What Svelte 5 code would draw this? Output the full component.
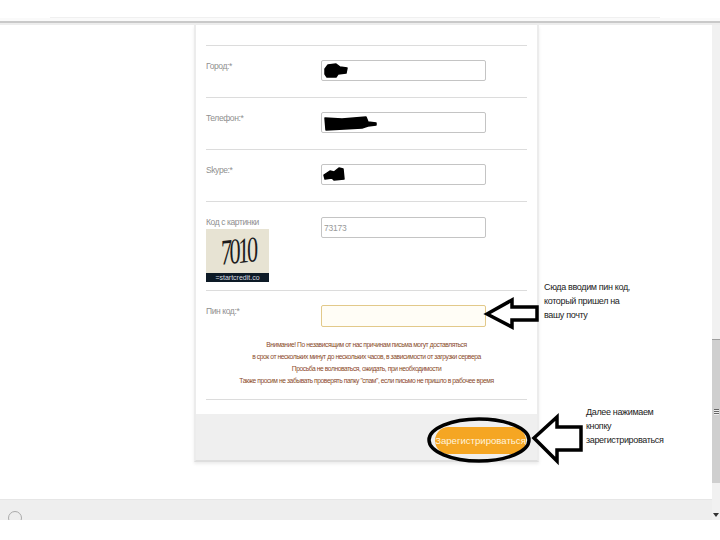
<script>
	const fields = [
		{ label: "Город:*", blot: "M3 7 L6 3 L14 2 L18 5 L25 6 L24 11 L16 12 L14 15 L5 15 L3 12 Z" },
		{ label: "Телефон:*", blot: "M3 4 L20 5 L44 3 L46 8 L54 9 L54 11 L46 12 L40 14 L4 16 Z" },
		{ label: "Skype:*", blot: "M2 9 L8 5 L12 6 L17 2 L21 3 L22 13 L12 14 L10 12 L3 13 Z" }
	];

	const notes = [
		"Внимание! По независящим от нас причинам письма могут доставляться",
		"в срок от нескольких минут до нескольких часов, в зависимости от загрузки сервера",
		"Просьба не волноваться, ожидать, при необходимости",
		"Также просим не забывать проверять папку \"спам\", если письмо не пришло в рабочее время"
	];
</script>

<div class="shot">
	<div class="top"></div>
	<div class="toolbar"></div>
	<div class="middle">
		<div class="left">
			<div class="content">
				<div class="card">
					<div class="form">
						<div class="spacer"></div>
						{#each fields as f}
							<div class="row">
								<span class="label">{f.label}</span>
								<div class="input">
									<svg class="blot" width="60" height="18" viewBox="0 0 60 18"><path d={f.blot} fill="#000" stroke="#000" stroke-width="1.5" stroke-linejoin="round" /></svg>
								</div>
							</div>
						{/each}
						<div class="row captcha-row">
							<div class="captcha-col">
								<span class="label">Код с картинки</span>
								<div class="captcha">
									<div class="captcha-pic"><span>7010</span></div>
									<div class="captcha-foot">=startcredit.co</div>
								</div>
							</div>
							<div class="input"><span class="value">73173</span></div>
						</div>
						<div class="row pin-row">
							<span class="label">Пин код:*</span>
							<div class="input active"></div>
						</div>
						<div class="notes">
							{#each notes as n}
								<p>{n}</p>
							{/each}
						</div>
					</div>
					<div class="actions">
						<button class="submit">Зарегистрироваться</button>
					</div>
				</div>
			</div>
			<div class="bottom"><span class="tray"></span></div>
		</div>
		<div class="scrollbar">
			<div class="thumb"><span class="grip"></span></div>
			<span class="down"></span>
		</div>
	</div>

	<!-- annotations drawn on top of the screenshot -->
	<svg class="marks" width="720" height="540" viewBox="0 0 720 540">
		<g fill="#fff" stroke="#000" stroke-width="3.5">
			<path d="M487 314 L512 300 L512 307 L537 307 L537 320 L512 320 L512 327 Z" />
			<path d="M534 438 L557 417 L557 427 L581 427 L581 450 L557 450 L557 461 Z" />
		</g>
		<ellipse cx="479" cy="440" rx="50" ry="21" fill="none" stroke="#000" stroke-width="3.5" />
	</svg>
	<div class="note note-a">
		<div>Сюда вводим пин код,</div>
		<div>который пришел на</div>
		<div>вашу почту</div>
	</div>
	<div class="note note-b">
		<div>Далее нажимаем</div>
		<div>кнопку</div>
		<div>зарегистрироваться</div>
	</div>
</div>

<style>
	:global(body) {
		margin: 0;
		background: #fff;
	}

	.shot {
		position: relative;
		width: 720px;
		height: 540px;
		overflow: hidden;
		font-family: "Liberation Sans", Arial, sans-serif;
		display: flex;
		flex-direction: column;
	}

	.top {
		height: 18px;
		margin: 0 60px 0 50px;
		border-bottom: 1px solid #f0f0f0;
		box-sizing: border-box;
	}

	.toolbar {
		height: 7px;
		background: linear-gradient(#fafafa 0 3px, #c9c9c9 3px 5px, #ededed 5px);
	}

	.middle {
		height: 495px;
		display: flex;
	}

	.left {
		width: 712px;
		display: flex;
		flex-direction: column;
	}

	.content {
		height: 474px;
		padding-left: 194px;
		box-sizing: border-box;
	}

	.card {
		width: 345px;
		height: 437px;
		box-sizing: border-box;
		border-left: 2px solid #ececec;
		border-right: 2px solid #ececec;
		border-bottom: 2px solid #dedede;
		box-shadow: 0 2px 3px rgba(0, 0, 0, 0.08);
		display: flex;
		flex-direction: column;
	}

	.form {
		flex: 1;
		padding: 0 10px;
	}

	.spacer {
		height: 20px;
		border-bottom: 1px solid #dcdcdc;
	}

	.row {
		display: grid;
		grid-template-columns: 115px 165px;
		padding-top: 14px;
		height: 37px;
		border-bottom: 1px solid #dcdcdc;
	}

	.label {
		font-size: 8.5px;
		letter-spacing: -0.4px;
		color: #8f8f8f;
		margin-top: 1px;
		white-space: nowrap;
	}

	.input {
		height: 21px;
		box-sizing: border-box;
		border: 1px solid #c4c4c4;
		border-radius: 2px;
		display: flex;
		align-items: center;
		overflow: hidden;
	}

	.blot {
		flex: none;
	}

	.value {
		font-size: 8.5px;
		letter-spacing: -0.2px;
		color: #999;
		padding-left: 2px;
	}

	.captcha-row {
		height: 73px;
		padding-top: 15px;
	}

	.captcha-col {
		display: flex;
		flex-direction: column;
	}

	.captcha-col .label {
		height: 12px;
		margin: 0;
		line-height: 10px;
	}

	.captcha {
		width: 63px;
		height: 53px;
		display: flex;
		flex-direction: column;
	}

	.captcha-pic {
		flex: 1;
		background: #e7e3d3;
		display: flex;
		align-items: center;
		justify-content: center;
		overflow: hidden;
	}

	.captcha-pic span {
		font-family: "Liberation Serif", serif;
		font-style: italic;
		font-size: 36px;
		letter-spacing: -4px;
		line-height: 40px;
		color: #1c1c1c;
		transform: rotate(-6deg) scaleX(0.62);
	}

	.captcha-foot {
		height: 9px;
		background: #0d1a26;
		color: #d8dde0;
		font-size: 7px;
		line-height: 9px;
		text-align: center;
		white-space: nowrap;
	}

	.pin-row {
		border-bottom: none;
		height: 22px;
		padding-top: 14px;
	}

	.pin-row .input {
		height: 22px;
		border-color: #e2c98a;
		background: #fffdf6;
	}

	.notes {
		margin-top: 12px;
		padding-bottom: 12px;
		border-bottom: 1px solid #dcdcdc;
		height: 48px;
		text-align: center;
		color: #8a4a2a;
		font-size: 6.7px;
		letter-spacing: -0.42px;
	}

	.notes p {
		margin: 0;
		height: 12px;
		line-height: 12px;
		white-space: nowrap;
	}

	.actions {
		height: 46px;
		background: #efefef;
		display: flex;
		justify-content: flex-end;
		align-items: center;
		padding-right: 11px;
		margin-top: 14px;
		flex: none;
	}

	.submit {
		width: 91px;
		height: 27px;
		margin-top: 6px;
		border: none;
		border-radius: 14px;
		background: #f5a623;
		color: #fff3dc;
		font-family: inherit;
		font-size: 9.6px;
		padding: 0;
		white-space: nowrap;
	}

	.bottom {
		height: 21px;
		background: #eeeeee;
		border-top: 1px solid #e6e6e6;
		box-sizing: border-box;
		padding: 11px 0 0 8px;
		overflow: hidden;
	}

	.tray {
		display: block;
		width: 14px;
		height: 14px;
		border: 1px solid #aaa;
		border-radius: 50%;
		box-sizing: border-box;
	}

	.scrollbar {
		width: 8px;
		background: #f1f1f1;
		position: relative;
	}

	.thumb {
		position: absolute;
		top: 314px;
		left: 0;
		width: 8px;
		height: 144px;
		background: #cfcfcf;
		border-top: 1px solid #9d9d9d;
		box-sizing: border-box;
		display: flex;
		align-items: center;
		justify-content: center;
	}

	.grip {
		width: 5px;
		height: 6px;
		background: repeating-linear-gradient(#666 0 1px, #eee 1px 2px);
	}

	.down {
		position: absolute;
		bottom: 3px;
		left: 1px;
		border-left: 3px solid transparent;
		border-right: 3px solid transparent;
		border-top: 4px solid #333;
	}

	.marks {
		position: absolute;
		top: 0;
		left: 0;
		pointer-events: none;
	}

	.note {
		position: absolute;
		color: #222;
		font-size: 9px;
		letter-spacing: -0.35px;
		line-height: 14px;
		white-space: nowrap;
	}

	.note-a {
		left: 544px;
		top: 280px;
	}

	.note-b {
		left: 586px;
		top: 405px;
	}
</style>
